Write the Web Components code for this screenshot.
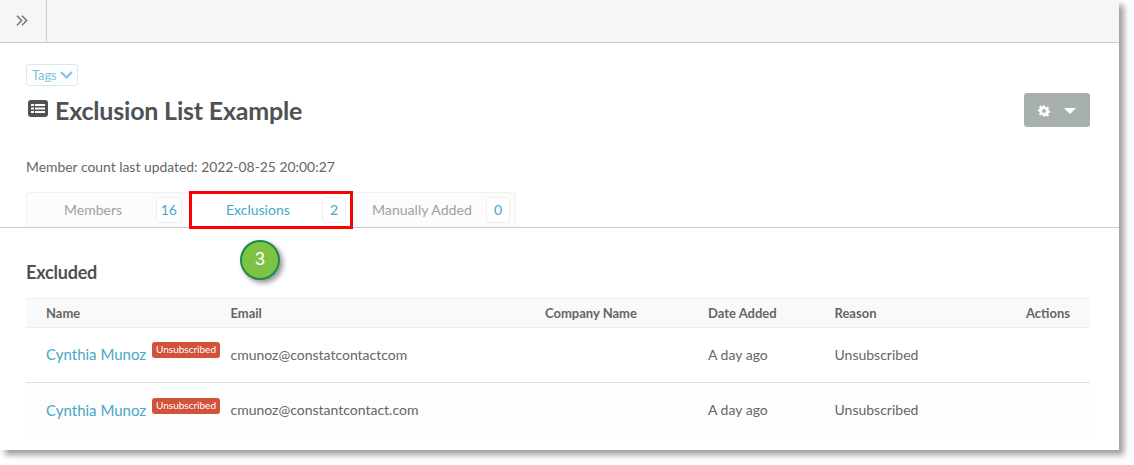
<!DOCTYPE html>
<html>
<head>
<meta charset="utf-8">
<title>Exclusion List Example</title>
<style>
  html, body { margin: 0; background: #fff; }
  body { height: 465px; overflow: hidden; font-family: Lato, "Open Sans", sans-serif; color: #555; }
</style>
</head>
<body>
<app-frame>
  <top-bar></top-bar>
  <page-header title-text="Exclusion List Example" updated="Member count last updated: 2022-08-25 20:00:27"></page-header>
  <tab-strip>
    <tab-item label="Members" count="16"></tab-item>
    <tab-item label="Exclusions" count="2" active></tab-item>
    <tab-item label="Manually Added" count="0"></tab-item>
  </tab-strip>
  <member-table heading="Excluded">
    <member-row name="Cynthia Munoz" email="cmunoz@constatcontactcom" added="A day ago" reason="Unsubscribed"></member-row>
    <member-row name="Cynthia Munoz" email="cmunoz@constantcontact.com" added="A day ago" reason="Unsubscribed" alt></member-row>
  </member-table>
</app-frame>

<script>
class AppFrame extends HTMLElement {
  constructor() {
    super();
    this.attachShadow({ mode: 'open' });
    this.shadowRoot.innerHTML = `
      <style>
        :host {
          display: block;
          position: relative;
          box-sizing: border-box;
          width: 1119px;
          height: 450px;
          background: #fff;
          box-shadow: 5px 5px 6px rgba(0, 0, 0, 0.38);
        }
      </style>
      <slot></slot>
    `;
  }
}

class TopBar extends HTMLElement {
  constructor() {
    super();
    this.attachShadow({ mode: 'open' });
    this.shadowRoot.innerHTML = `
      <style>
        :host {
          display: flex;
          box-sizing: border-box;
          height: 43px;
          background: #f6f6f6;
          border-bottom: 1px solid #ccc;
        }
        .toggle {
          box-sizing: border-box;
          width: 47px;
          border-right: 1px solid #ccc;
          display: flex;
          align-items: center;
          justify-content: center;
          padding: 0 2px 1px 0;
        }
      </style>
      <div class="toggle">
        <svg width="12" height="11" viewBox="0 0 12 11" fill="none" stroke="#777" stroke-width="1.6">
          <path d="M1 .8 5.6 5.5 1 10.2M6 .8l4.6 4.7L6 10.2"/>
        </svg>
      </div>
    `;
  }
}

class PageHeader extends HTMLElement {
  constructor() {
    super();
    this.attachShadow({ mode: 'open' });
    this.shadowRoot.innerHTML = `
      <style>
        :host {
          display: block;
          box-sizing: border-box;
          height: 149px;
          padding: 21px 29px 0 26px;
        }
        .tags {
          display: inline-flex;
          align-items: center;
          gap: 3px;
          box-sizing: border-box;
          width: 52px;
          height: 22px;
          padding-left: 5px;
          border: 1px solid #d3ebf6;
          border-radius: 3px;
          font-size: 12.8px;
          color: #7cc3e2;
        }
        .head {
          display: flex;
          justify-content: space-between;
          align-items: flex-start;
        }
        h1 {
          display: flex;
          align-items: center;
          gap: 7px;
          margin: 8px 0 0 2px;
          height: 32px;
          font-size: 25px;
          font-weight: 700;
          color: #4e5254;
          letter-spacing: -0.2px;
        }
        h1 svg { margin-top: -3px; }
        .gear {
          display: flex;
          align-items: center;
          justify-content: center;
          gap: 14px;
          width: 66px;
          height: 34px;
          margin-top: 7px;
          padding-top: 1px;
          box-sizing: border-box;
          background: #a8b0ae;
          border-radius: 3px;
        }
        .updated {
          margin-top: 30px;
          font-size: 13.9px;
          line-height: 20px;
          color: #666;
        }
      </style>
      <div class="tags">Tags
        <svg width="13" height="8" viewBox="0 0 13 8" fill="none" stroke="#7cc3e2" stroke-width="2"><path d="M1 1l5.500 5.500L12 1"/></svg>
      </div>
      <div class="head">
        <h1>
          <svg width="20" height="17" viewBox="0 0 20 17">
            <rect width="20" height="17" rx="3" fill="#4e5254"/>
            <g fill="#fff">
              <rect x="3" y="4" width="3" height="2"/><rect x="7" y="4" width="10" height="2"/>
              <rect x="3" y="7.500" width="3" height="2"/><rect x="7" y="7.500" width="10" height="2"/>
              <rect x="3" y="11" width="3" height="2"/><rect x="7" y="11" width="10" height="2"/>
            </g>
          </svg>
          <span class="title"></span>
        </h1>
        <div class="gear">
          <svg width="12" height="12" viewBox="0 0 24 24" fill="#fff">
            <path fill-rule="evenodd" d="M10 1h4l.6 3.200 2 .8 2.700-1.800 2.800 2.800-1.800 2.700.8 2 3.200.6v4l-3.200.6-.8 2 1.800 2.700-2.800 2.800-2.700-1.800-2 .8L14 23h-4l-.6-3.200-2-.8-2.700 1.800-2.800-2.800L3.700 15.300l-.8-2-3.200-.6V9.300l3.200-.6.8-2L1.900 4l2.800-2.800 2.700 1.800 2-.8zM12 8a4 4 0 1 0 0 8 4 4 0 0 0 0-8z"/>
          </svg>
          <svg width="12" height="6" viewBox="0 0 12 6" fill="#fff"><path d="M0 0h12L6 6z"/></svg>
        </div>
      </div>
      <div class="updated"></div>
    `;
    this.shadowRoot.querySelector('.title').textContent = this.getAttribute('title-text');
    this.shadowRoot.querySelector('.updated').textContent = this.getAttribute('updated');
  }
}

class TabStrip extends HTMLElement {
  constructor() {
    super();
    this.attachShadow({ mode: 'open' });
    this.shadowRoot.innerHTML = `
      <style>
        :host {
          display: block;
          position: relative;
          box-sizing: border-box;
          height: 36px;
          padding-left: 26px;
          border-bottom: 1px solid #ccc;
        }
        .tabs {
          display: flex;
          box-sizing: border-box;
          width: 490px;
          height: 35px;
          background: #fcfcfc;
          border: 1px solid #f1f1f1;
          border-bottom: 0;
          border-radius: 3px 3px 0 0;
        }
        /* annotation drawn over the screenshot */
        .marker {
          position: absolute;
          left: 189px;
          top: -1px;
          width: 164px;
          height: 38px;
          box-sizing: border-box;
          border: 3px solid #f00;
          pointer-events: none;
        }
        .callout {
          position: absolute;
          left: 240px;
          top: 48px;
          width: 40px;
          height: 40px;
          box-sizing: border-box;
          border-radius: 50%;
          background: #7dc242;
          border: 2px solid #1f8a4c;
          box-shadow: 3px 3px 5px rgba(0, 0, 0, 0.4);
          color: #fff;
          font: 18px/35px "Liberation Sans", Arial, sans-serif;
          text-align: center;
        }
      </style>
      <div class="tabs"><slot></slot></div>
      <div class="marker"></div>
      <div class="callout">3</div>
    `;
  }
}

class TabItem extends HTMLElement {
  constructor() {
    super();
    this.attachShadow({ mode: 'open' });
    this.shadowRoot.innerHTML = `
      <style>
        :host {
          display: flex;
          align-items: center;
          box-sizing: border-box;
          height: 35px;
          padding-bottom: 2px;
          font-size: 14px;
          color: #9aa3a8;
        }
        :host(:nth-child(1)) { width: 157px; padding-left: 37px; }
        :host(:nth-child(2)) { width: 161px; padding-left: 36px; background: #fff; margin-left: 6px; }
        :host(:nth-child(3)) { flex: 1; padding-left: 21px; font-size: 14.1px; }
        :host([active]) { color: #46a7c7; }
        .label { flex: 1; }
        .count {
          box-sizing: border-box;
          min-width: 24px;
          height: 26px;
          margin-right: 5px;
          padding: 0 4px;
          border: 1px solid #eee;
          border-radius: 4px;
          background: #fff;
          color: #46a7c7;
          line-height: 24px;
          text-align: center;
        }
        :host(:nth-child(1)) .count { min-width: 25px; margin-right: 2px; }
      </style>
      <span class="label"></span><span class="count"></span>
    `;
    this.shadowRoot.querySelector('.label').textContent = this.getAttribute('label');
    this.shadowRoot.querySelector('.count').textContent = this.getAttribute('count');
  }
}

const COLUMNS = '184.5px 314.5px 163px 126.5px 1fr';

class MemberTable extends HTMLElement {
  constructor() {
    super();
    this.attachShadow({ mode: 'open' });
    this.shadowRoot.innerHTML = `
      <style>
        :host {
          display: block;
          padding: 0 29px 0 26px;
        }
        h2 {
          margin: 0;
          padding-top: 32px;
          height: 38px;
          font-size: 18px;
          line-height: 24px;
          font-weight: 700;
          color: #4e5254;
          letter-spacing: -0.2px;
        }
        .cols {
          display: grid;
          grid-template-columns: ${COLUMNS};
          box-sizing: border-box;
          height: 30px;
          padding: 0 20px;
          align-items: center;
          background: #f9f9f9;
          border-top: 1px solid #eee;
          border-bottom: 1px solid #eee;
          font-size: 13px;
          font-weight: 700;
          color: #666;
        }
        .last { display: flex; justify-content: space-between; }
      </style>
      <h2></h2>
      <div class="cols">
        <span>Name</span><span>Email</span><span>Company Name</span><span>Date Added</span>
        <span class="last"><span>Reason</span><span>Actions</span></span>
      </div>
      <slot></slot>
    `;
    this.shadowRoot.querySelector('h2').textContent = this.getAttribute('heading');
  }
}

class MemberRow extends HTMLElement {
  constructor() {
    super();
    this.attachShadow({ mode: 'open' });
    this.shadowRoot.innerHTML = `
      <style>
        :host {
          display: grid;
          grid-template-columns: ${COLUMNS};
          box-sizing: border-box;
          height: 55px;
          padding: 0 20px 2px;
          align-items: center;
          border-bottom: 1px solid #ddd;
          font-size: 14px;
          color: #666;
        }
        :host([alt]) { background: #fdfdfd; border-bottom: 0; height: 54px; padding-bottom: 1px; }
        .who { display: flex; align-items: center; white-space: nowrap; }
        .name { font-size: 15px; color: #46a7c7; }
        .badge {
          display: inline-block;
          margin: -8px 0 0 6px;
          padding: 0 4px;
          height: 16px;
          border-radius: 3px;
          background: #d2523a;
          color: #fff;
          font-size: 10px;
          line-height: 15px;
        }
      </style>
      <div class="who"><span class="name"></span><span class="badge">Unsubscribed</span></div>
      <span class="email"></span><span></span><span class="added"></span><span class="reason"></span>
    `;
    for (const key of ['name', 'email', 'added', 'reason']) {
      this.shadowRoot.querySelector('.' + key).textContent = this.getAttribute(key);
    }
  }
}

customElements.define('app-frame', AppFrame);
customElements.define('top-bar', TopBar);
customElements.define('page-header', PageHeader);
customElements.define('tab-strip', TabStrip);
customElements.define('tab-item', TabItem);
customElements.define('member-table', MemberTable);
customElements.define('member-row', MemberRow);
</script>
</body>
</html>
